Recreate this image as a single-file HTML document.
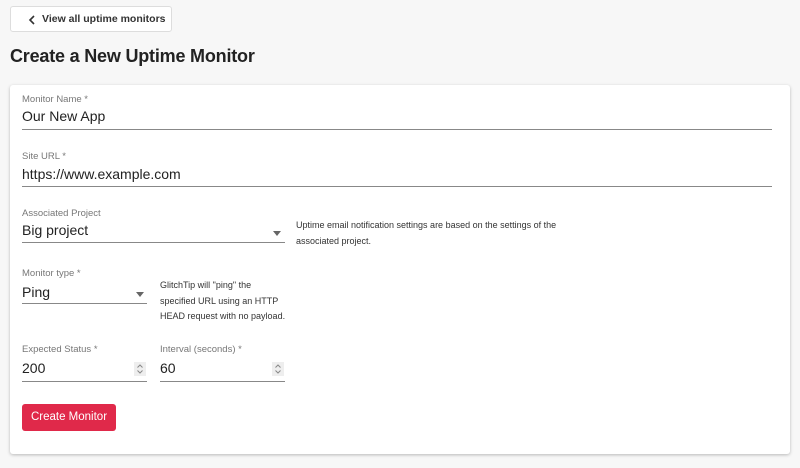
<!DOCTYPE html>
<html><head><style>
body{margin:0;background:#f7f7f7;font-family:"Liberation Sans",sans-serif;width:800px;height:468px;position:relative;overflow:hidden;color:#222}
.a{position:absolute;white-space:nowrap}
.back{left:10px;top:6px;width:162px;height:26px;border:1px solid #ddd;border-radius:3px;background:#fff;font-size:10.5px;font-weight:bold;color:#333;box-sizing:border-box}
h1{position:absolute;left:10px;top:46px;margin:0;font-size:18px;font-weight:bold;color:#222;letter-spacing:-0.2px}
.card{left:10px;top:85px;width:780px;height:369px;background:#fff;border-radius:3px;box-shadow:0 1px 3px rgba(0,0,0,.25)}
.lb{font-size:9.5px;color:#777}
.v{font-size:14px;color:#222}
.ln{height:1px;background:#888}
.h{font-size:9px;color:#333;line-height:15.5px}
.sp{width:12px;height:14px;background:#eee}
.arr{width:0;height:0;border-left:4.5px solid transparent;border-right:4.5px solid transparent;border-top:5px solid #666}
</style></head><body>
<div class="a back"><svg class="a" style="left:17px;top:8px" width="8" height="10"><path d="M6 1L2 5l4 4" stroke="#333" stroke-width="1.6" fill="none"/></svg><span class="a" style="left:31px;top:6px">View all uptime monitors</span></div>
<h1>Create a New Uptime Monitor</h1>
<div class="a card"></div>
<div class="a lb" style="left:22px;top:94px">Monitor Name *</div>
<div class="a v" style="left:22px;top:108px">Our New App</div>
<div class="a ln" style="left:22px;top:129px;width:750px"></div>
<div class="a lb" style="left:22px;top:151px">Site URL *</div>
<div class="a v" style="left:22px;top:166px">https://www.example.com</div>
<div class="a ln" style="left:22px;top:186px;width:750px"></div>
<div class="a lb" style="left:22px;top:208px">Associated Project</div>
<div class="a v" style="left:22px;top:222px">Big project</div>
<div class="a arr" style="left:273px;top:231px"></div>
<div class="a ln" style="left:22px;top:242px;width:263px"></div>
<div class="a h" style="left:296px;top:218px">Uptime email notification settings are based on the settings of the<br>associated project.</div>
<div class="a lb" style="left:22px;top:268px">Monitor type *</div>
<div class="a v" style="left:22px;top:284px">Ping</div>
<div class="a arr" style="left:136px;top:292px"></div>
<div class="a ln" style="left:22px;top:303px;width:125px"></div>
<div class="a h" style="left:160px;top:278px">GlitchTip will "ping" the<br>specified URL using an HTTP<br>HEAD request with no payload.</div>
<div class="a lb" style="left:22px;top:344px">Expected Status *</div>
<div class="a v" style="left:22px;top:360px">200</div>
<div class="a sp" style="left:134px;top:362px"><svg width="12" height="14"><path d="M3.5 5.5L6 3l2.5 2.5M3.5 8.5L6 11l2.5-2.5" stroke="#888" fill="none"/></svg></div>
<div class="a ln" style="left:22px;top:381px;width:125px"></div>
<div class="a lb" style="left:160px;top:344px">Interval (seconds) *</div>
<div class="a v" style="left:160px;top:360px">60</div>
<div class="a sp" style="left:272px;top:362px"><svg width="12" height="14"><path d="M3.5 5.5L6 3l2.5 2.5M3.5 8.5L6 11l2.5-2.5" stroke="#888" fill="none"/></svg></div>
<div class="a ln" style="left:160px;top:381px;width:125px"></div>
<div class="a" style="left:22px;top:404px;width:94px;height:27px;background:#e0294a;border-radius:3px;color:#fff;font-size:11.5px;text-align:center;line-height:27px">Create Monitor</div>
</body></html>
